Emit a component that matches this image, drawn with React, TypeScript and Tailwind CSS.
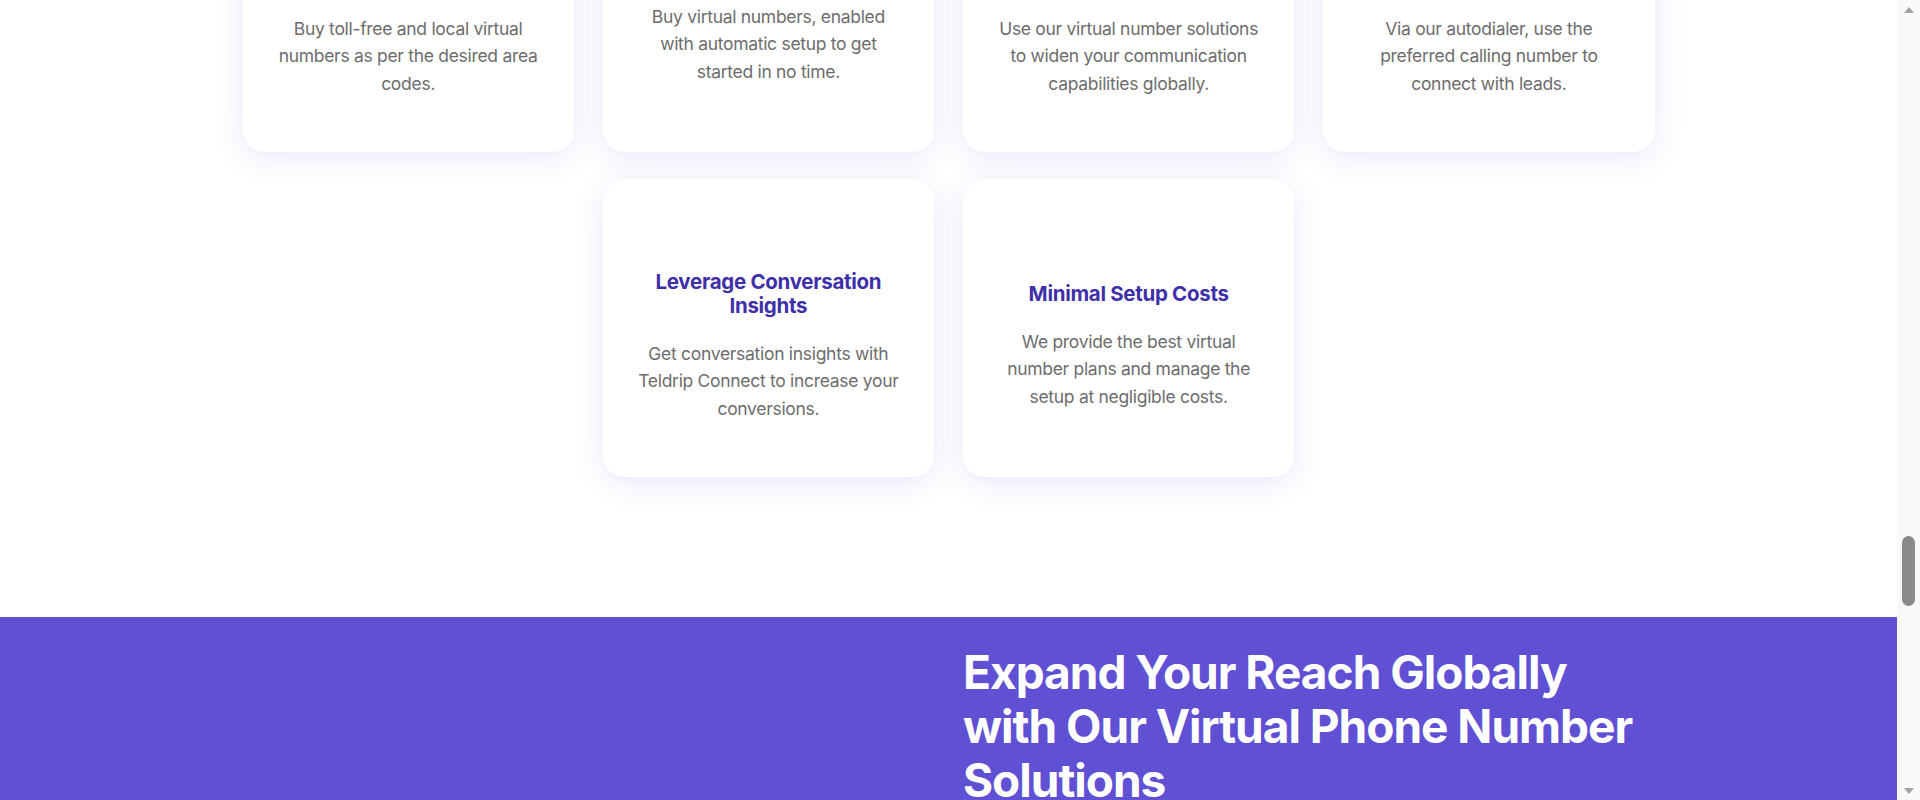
const topRow = [
  {
    title: "Get Local and Toll-Free Numbers",
    text: "Buy toll-free and local virtual numbers as per the desired area codes.",
  },
  {
    title: "Instant Activation",
    text: "Buy virtual numbers, enabled with automatic setup to get started in no time.",
  },
  {
    title: "Expand Communication Globally",
    text: "Use our virtual number solutions to widen your communication capabilities globally.",
  },
  {
    title: "Use Preferred Caller ID Numbers",
    text: "Via our autodialer, use the preferred calling number to connect with leads.",
  },
];

const bottomRow = [
  {
    title: "Leverage Conversation Insights",
    text: "Get conversation insights with Teldrip Connect to increase your conversions.",
  },
  {
    title: "Minimal Setup Costs",
    text: "We provide the best virtual number plans and manage the setup at negligible costs.",
  },
];

function FeatureCard({ title, text }: { title: string; text: string }) {
  return (
    <div className="flex h-[298px] flex-col items-center justify-center rounded-[22px] bg-white px-8 text-center shadow-[0_6px_30px_rgba(96,80,212,0.13)]">
      {/* icon slot */}
      <div className="mb-4 h-5 w-5" />
      <h3 className="text-[20.5px] font-bold leading-6 tracking-[-0.3px] text-[#3e30a8]">{title}</h3>
      <p className="mt-[22px] text-[17.5px] leading-[27.5px] tracking-[-0.3px] text-[#6d6d6d]">{text}</p>
    </div>
  );
}

function FakeScrollbar() {
  return (
    <div className="flex h-full w-[23px] shrink-0 flex-col items-center bg-[#f9f9f9]">
      <svg width="10" height="6" viewBox="0 0 10 6" className="mt-[7px]">
        <path d="M5 0 L10 6 L0 6 Z" fill="#a3a3a3" />
      </svg>
      <div className="mt-[523px] h-[70px] w-[13px] rounded-full bg-[#8a8a8a]" />
      <div className="flex-1" />
      <svg width="10" height="6" viewBox="0 0 10 6" className="mb-[6px]">
        <path d="M0 0 L10 0 L5 6 Z" fill="#a3a3a3" />
      </svg>
    </div>
  );
}

export default function App() {
  return (
    <div className="flex h-[800px] overflow-hidden bg-white font-['Inter',sans-serif]">
      <main className="min-w-0 flex-1 overflow-hidden">
        {/* Features grid */}
        <section className="-mt-[146px] pb-[140px]">
          <div className="mx-auto grid w-[1412px] grid-cols-4 gap-x-[29px] gap-y-[27px]">
            {topRow.map((c) => (
              <FeatureCard key={c.title} title={c.title} text={c.text} />
            ))}
            <div />
            {bottomRow.map((c) => (
              <FeatureCard key={c.title} title={c.title} text={c.text} />
            ))}
          </div>
        </section>

        {/* Global reach banner */}
        <section className="bg-[#6050d4] pb-24 pt-7">
          <div className="mx-auto grid w-[1412px] grid-cols-2 gap-x-[29px]">
            <div />
            <div>
              <h2 className="text-[46px] font-bold leading-[54px] tracking-[-1px] text-white">
                Expand Your Reach Globally with Our Virtual Phone Number Solutions
              </h2>
              <p className="mt-6 text-lg leading-8 text-white/90">
                Get local and toll-free virtual phone numbers in multiple countries and connect with
                customers wherever they are.
              </p>
            </div>
          </div>
        </section>
      </main>
      <FakeScrollbar />
    </div>
  );
}
